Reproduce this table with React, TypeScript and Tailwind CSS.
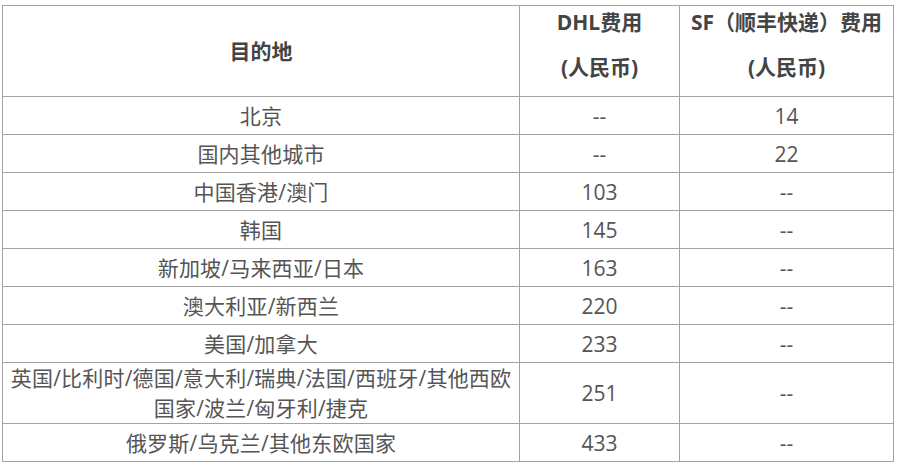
import React from 'react';

const rows: Array<{ place: string[]; dhl: string; sf: string }> = [
  { place: ['北京'], dhl: '--', sf: '14' },
  { place: ['国内其他城市'], dhl: '--', sf: '22' },
  { place: ['中国香港/澳门'], dhl: '103', sf: '--' },
  { place: ['韩国'], dhl: '145', sf: '--' },
  { place: ['新加坡/马来西亚/日本'], dhl: '163', sf: '--' },
  { place: ['澳大利亚/新西兰'], dhl: '220', sf: '--' },
  { place: ['美国/加拿大'], dhl: '233', sf: '--' },
  { place: ['英国/比利时/德国/意大利/瑞典/法国/西班牙/其他西欧', '国家/波兰/匈牙利/捷克'], dhl: '251', sf: '--' },
  { place: ['俄罗斯/乌克兰/其他东欧国家'], dhl: '433', sf: '--' },
];

const cell = 'border border-[#a3a3a3] p-0 text-center align-middle';

const App = () => {
  return (
    <div
      className="w-[899px] h-[467px] bg-white pt-[5px] pl-[2px] text-[21px] text-[#555]"
      style={{ fontFamily: '"Open Sans", "Noto Sans CJK SC", sans-serif' }}
    >
      <table className="table-fixed border-collapse w-[891px]">
        <colgroup>
          <col className="w-[517px]" />
          <col className="w-[160px]" />
          <col className="w-[214px]" />
        </colgroup>
        <thead>
          {/* Header */}
          <tr className="font-bold text-[#444]">
            <th className={`${cell} h-[91px]`}>
              <div className="leading-[30px]">目的地</div>
            </th>
            <th className={`${cell} h-[91px] align-top`}>
              <div className="leading-[30px] pt-[1px]">DHL费用</div>
              <div className="leading-[30px] mt-[15px]">(人民币)</div>
            </th>
            <th className={`${cell} h-[91px] align-top`}>
              <div className="leading-[30px] pt-[1px]">SF（顺丰快递）费用</div>
              <div className="leading-[30px] mt-[15px]">(人民币)</div>
            </th>
          </tr>
        </thead>
        <tbody>
          {rows.map((r, i) => (
            <tr key={i}>
              <td className={`${cell} ${r.place.length > 1 ? 'h-[61px]' : 'h-[38px]'}`}>
                {r.place.map((line, j) => (
                  <div key={j} className="leading-[30px] whitespace-nowrap tracking-[0.2px]">{line}</div>
                ))}
              </td>
              <td className={cell}>
                <div className="leading-[30px]">{r.dhl}</div>
              </td>
              <td className={cell}>
                <div className="leading-[30px]">{r.sf}</div>
              </td>
            </tr>
          ))}
        </tbody>
      </table>
    </div>
  );
};

export default App;
